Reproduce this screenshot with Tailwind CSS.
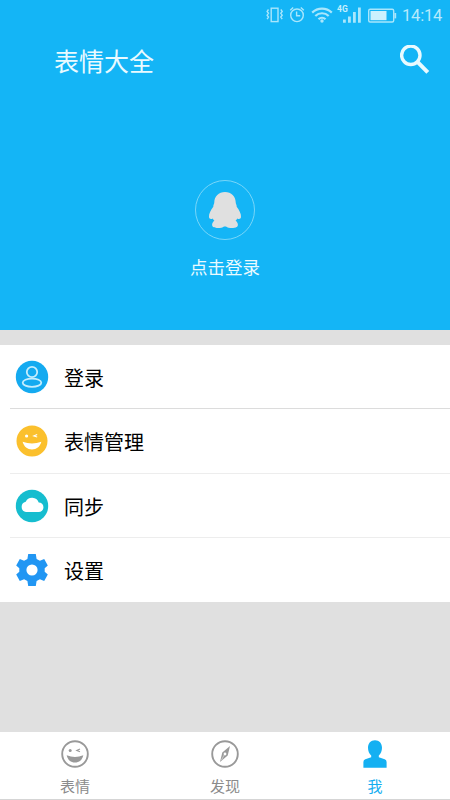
<!DOCTYPE html>
<html lang="zh-CN">
<head>
<meta charset="utf-8">
<title>表情大全</title>
<script src="https://cdn.jsdelivr.net/npm/@tailwindcss/browser@4"></script>
</head>
<body class="w-[450px] h-[800px] overflow-hidden flex flex-col bg-[#e0e0e0] font-['Noto_Sans_CJK_SC',sans-serif]">
<header class="h-[330px] shrink-0 bg-[#14b5f6] flex flex-col">
  <div class="h-[30px] shrink-0 flex items-center pl-[265px] text-[#a9e6fc]">
    <svg class="w-[132px] h-[30px] shrink-0" viewBox="265 0 132 30" fill="none" stroke="currentColor" stroke-width="1.4">
      <rect x="271.2" y="8.2" width="6.8" height="13.4"/>
      <path d="M268.5 9.5l-1.4 1.9 1.4 1.9-1.4 1.9 1.4 1.9-1.4 2.1M280.8 9.5l1.4 1.9-1.4 1.9 1.4 1.9-1.4 1.9 1.4 2.1"/>
      <circle cx="297" cy="15.3" r="6.3"/><path d="M296.6 11.5v4.3h3.6M290.2 10.3l3-2.8M300.8 7.5l3 2.8"/>
      <path stroke-width="2.2" d="M312.2 12.6a14 14 0 0 1 19.6 0M315.3 16a9.5 9.5 0 0 1 13.4 0M318.5 19.2a5 5 0 0 1 7 0"/>
      <circle cx="322" cy="21" r="1.7" fill="currentColor" stroke="none"/>
      <path stroke="none" fill="currentColor" d="M343 19.5h2.8V22.7H343zM348 16.5h2.8v6.2H348zM353 12h2.8v10.7H353zM358 7.5h2.8v15.2H358z"/>
      <rect x="368.7" y="9.2" width="25" height="12.8" rx="1.5"/>
      <path stroke="none" fill="#cbf1fe" d="M370.5 11h16v9.2h-16z"/><path stroke-width="1.8" d="M395.3 13v5.4"/>
      <text x="337" y="11.5" font-family="Roboto, sans-serif" font-size="8.5" font-weight="700" fill="#c5effd" stroke="none">4G</text>
    </svg>
    <span class="ml-[5px] text-[16.5px] leading-[30px] tracking-[-0.2px] font-[Roboto,sans-serif] text-[#b5eafc] translate-y-[0.5px]">14:14</span>
  </div>
  <div class="h-[60px] shrink-0 flex items-center justify-between pl-[54px] pr-[20px] text-[#eafaff]">
    <h1 class="text-[25px] leading-[60px]">表情大全</h1>
    <svg class="w-[30px] h-[30px]" viewBox="0 0 30 30" fill="none" stroke="currentColor" stroke-width="3.4"><circle cx="10.8" cy="10.3" r="9.2"/><path d="M17.2 16.7L27.8 27.3" stroke-width="4"/></svg>
  </div>
  <div class="pt-[90px] flex flex-col items-center">
    <svg class="w-[60px] h-[60px]" viewBox="0 0 60 60">
      <circle cx="30" cy="30" r="29.5" fill="none" stroke="#83d9f8" stroke-width="0.9"/>
      <path fill="#e0e0e0" d="M30 12C23.7 12 19.3 16.5 19.3 22.3C19.3 24 18.1 24.8 18.3 26.8C15.8 30 13.7 34 14 37C14.3 39.4 16.4 39.2 17.8 38.4C18.3 39.4 18.6 40 19.4 40.8C17.9 41.8 17 43.4 17.1 45C17.4 49 26.5 48.6 29 46.4H31C33.5 48.6 42.6 49 42.9 45C43 43.4 42.1 41.8 40.6 40.8C41.4 40 41.7 39.4 42.2 38.4C43.6 39.2 45.7 39.4 46 37C46.3 34 44.2 30 41.7 26.8C41.9 24.8 40.7 24 40.7 22.3C40.7 16.5 36.3 12 30 12Z"/>
    </svg>
    <span class="mt-[14px] text-[17.5px] leading-[26px] text-[#eafaff]">点击登录</span>
  </div>
</header>
<main class="mt-[15px] h-[257px] shrink-0 bg-white flex flex-col text-[20px] leading-[30px] text-black">
  <div class="h-[64px] ml-[10px] pl-[5px] flex items-center border-b border-[#dcdcdc]">
    <svg class="w-[34px] h-[34px]" viewBox="0 0 34 34"><circle cx="17" cy="17" r="16.2" fill="#14aaf0"/><g fill="none" stroke="#c5edfd" stroke-width="1.8"><circle cx="17" cy="12" r="5.2"/><ellipse cx="17" cy="22.7" rx="9.3" ry="4.1"/></g></svg>
    <span class="ml-[15px] pt-[2px]">登录</span>
  </div>
  <div class="h-[65px] ml-[10px] pl-[5px] flex items-center border-b border-[#ededed]">
    <svg class="w-[34px] h-[34px]" viewBox="0 0 34 34"><circle cx="17" cy="17" r="15.5" fill="#fbc02d"/><circle cx="11.6" cy="12" r="1.6" fill="#fff"/><path d="M22.2 10.4l-3.5 1.6 3.5 1.1" fill="none" stroke="#fff" stroke-width="1.1"/><path fill="#fff" d="M7.6 17.8Q17 21.4 26.4 17.8C25 22.8 21.5 25.5 17 25.5S9 22.8 7.6 17.8Z"/></svg>
    <span class="ml-[15px] pt-[2px]">表情管理</span>
  </div>
  <div class="h-[64px] ml-[10px] pl-[5px] flex items-center border-b border-[#ededed]">
    <svg class="w-[34px] h-[34px]" viewBox="0 0 34 34"><circle cx="17" cy="17" r="16.2" fill="#16bdcf"/><path fill="#fff" d="M11 23a5.2 5.2 0 0 1-.3-10.2A7 7 0 0 1 23.7 13.4a4.8 4.8 0 0 1-.1 9.6Z"/></svg>
    <span class="ml-[15px] pt-[2px]">同步</span>
  </div>
  <div class="h-[64px] ml-[10px] pl-[5px] flex items-center">
    <svg class="w-[34px] h-[34px]" viewBox="0 0 34 34"><path fill="#2196f3" fill-rule="evenodd" d="M13.2 1h7.6l.8 4.9 3.3 1.9 4.3-1.7 3.6 6.3-3.1 2.8v3.6l3.1 2.8-3.6 6.3-4.3-1.7-3.3 1.9-.8 4.9h-7.6l-.8-4.9-3.3-1.9-4.3 1.7-3.6-6.3 3.1-2.8v-3.6l-3.1-2.8 3.6-6.3 4.3 1.7 3.3-1.9ZM17 11.4a5.6 5.6 0 1 0 0 11.2a5.6 5.6 0 1 0 0-11.2Z"/></svg>
    <span class="ml-[15px] pt-[2px]">设置</span>
  </div>
</main>
<nav class="mt-auto h-[68px] shrink-0 bg-white border-b border-[#d5d5d5] grid grid-cols-3 text-[15px] leading-[22px] text-[#8b8b8b]">
  <div class="pt-[8px] flex flex-col items-center">
    <svg class="w-[28px] h-[28px]" viewBox="0 0 28 28"><circle cx="14" cy="14" r="12.8" fill="none" stroke="#999" stroke-width="1.9"/><circle cx="9.2" cy="10.4" r="1.5" fill="#999"/><path d="M19 8.9l-3.3 1.6 3.3 1.3" fill="none" stroke="#999" stroke-width="1.1"/><path fill="#999" d="M5.7 15.3Q14 18.8 22.3 15.3C21.3 20 18.1 22.6 14 22.6S6.7 20 5.7 15.3Z"/></svg>
    <span class="mt-[7px]">表情</span>
  </div>
  <div class="pt-[8px] flex flex-col items-center">
    <svg class="w-[28px] h-[28px]" viewBox="0 0 28 28"><circle cx="14" cy="14" r="12.8" fill="none" stroke="#999" stroke-width="1.9"/><path fill="#999" fill-rule="evenodd" d="M19 6L16.7 15.6L9 22L11.3 12.4ZM14 12.6a1.4 1.4 0 1 0 0 2.8a1.4 1.4 0 1 0 0-2.8Z"/><path d="M10.4 20.1L13.2 14.9" stroke="#fff" stroke-width=".5"/></svg>
    <span class="mt-[7px]">发现</span>
  </div>
  <div class="pt-[8px] flex flex-col items-center text-[#14aef0]">
    <svg class="w-[28px] h-[28px]" viewBox="0 0 28 28"><path fill="#14b0f2" d="M14 .3C9.7.3 7 3.4 7 7.8C7 11 8.2 13.8 10.2 15.4V17.2L4.3 19.3Q2.4 20 2.4 22V27.8H25.6V22Q25.6 20 23.7 19.3L17.8 17.2V15.4C19.8 13.8 21 11 21 7.8C21 3.4 18.3.3 14 .3Z"/></svg>
    <span class="mt-[7px]">我</span>
  </div>
</nav>
</body>
</html>
